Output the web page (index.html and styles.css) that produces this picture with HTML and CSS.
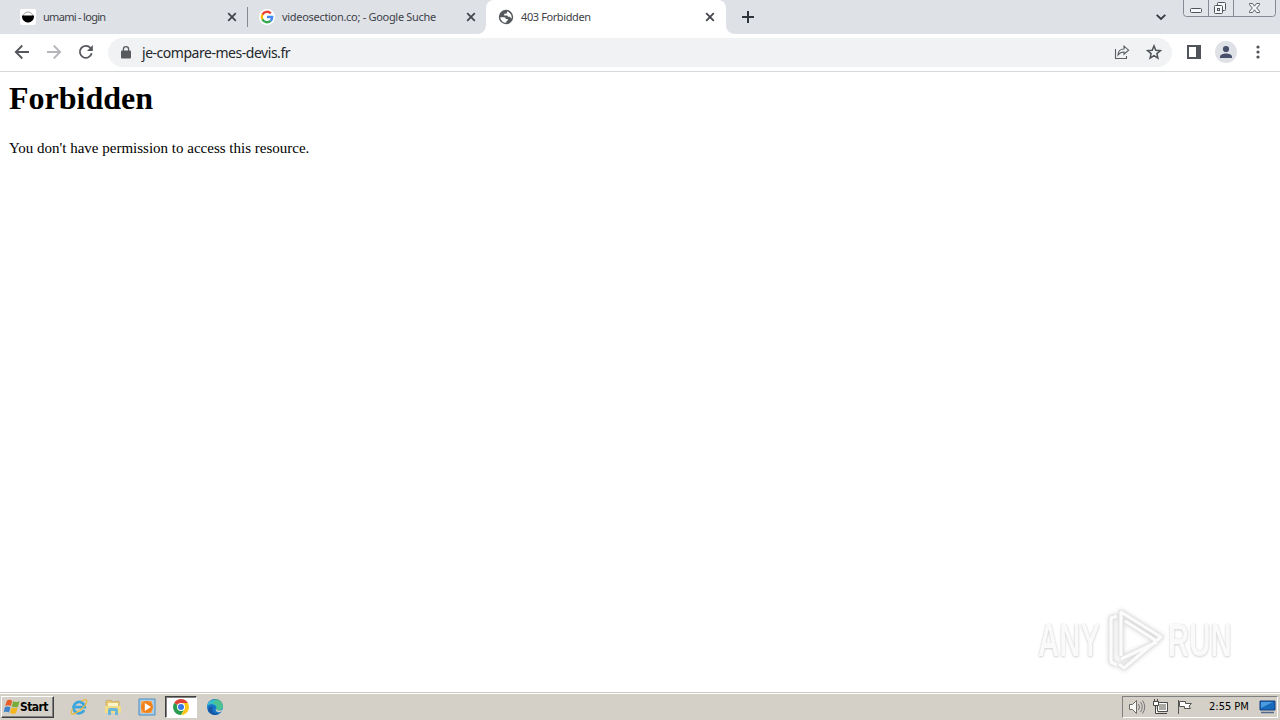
FILE: index.html
```html
<!DOCTYPE html>
<html lang="en">
<head>
<meta charset="utf-8">
<title>403 Forbidden</title>
<link rel="stylesheet" href="styles.css">
</head>
<body>
<header class="tabstrip">
  <div class="tab tab-first">
    <svg class="favicon" viewBox="0 0 16 16"><rect width="16" height="16" rx="2" fill="#fff"/><circle cx="8" cy="8" r="5" fill="#fff" stroke="#888" stroke-width=".8"/><path d="M2 6.500h12v1a6 6 0 0 1-12 0z" fill="#000"/></svg>
    <span class="label label-umami">umami - login</span>
    <svg class="close" viewBox="0 0 10 10"><path d="M1.200 1.200l7.600 7.600M8.800 1.200L1.200 8.800"/></svg>
  </div>
  <div class="tab tab-second">
    <svg class="favicon" viewBox="0 0 16 16"><circle cx="8" cy="8" r="8" fill="#fff"/><g fill="none" stroke-width="2.300"><path d="M3.400 5.600A5.200 5.200 0 0 1 11.800 4.400" stroke="#ea4335"/><path d="M3.400 10.400a5.200 5.200 0 0 1 0-4.800" stroke="#fbbc05"/><path d="M11.600 11.800a5.200 5.200 0 0 1-8.200-1.400" stroke="#34a853"/><path d="M8 8h5.200a5.200 5.200 0 0 1-1.600 3.800" stroke="#4285f4"/></g></svg>
    <span class="label label-google">videosection.co; - Google Suche</span>
    <svg class="close" viewBox="0 0 10 10"><path d="M1.200 1.200l7.600 7.600M8.800 1.200L1.200 8.800"/></svg>
  </div>
  <div class="tab tab-active">
    <svg class="favicon" viewBox="0 0 16 16"><circle cx="8" cy="8" r="7.200" fill="#56595d"/><path d="M2.200 8.200h4q1.600 0 1.600 1.700h2v1.400q-1.600 0-1.600 2.500A5.800 5.800 0 0 1 2.200 8.200zM9 2.600v1.200q0 1-1.500 1H6.200v1.700h2.500q1.300 0 1.300 1.300h1.200q1.300 0 1.600 1.400h.9A6 6 0 0 0 9 2.600z" fill="#fff"/></svg>
    <span class="label label-forbidden">403 Forbidden</span>
    <svg class="close" viewBox="0 0 10 10"><path d="M1.200 1.200l7.600 7.600M8.800 1.200L1.200 8.800"/></svg>
  </div>
  <svg class="new-tab" viewBox="0 0 14 14"><path d="M7 1v12M1 7h12" stroke="#30343b" stroke-width="2"/></svg>
  <svg class="tab-search" viewBox="0 0 12 8"><path d="M1.700 1.800L6 6l4.300-4.200" fill="none" stroke="#35383f" stroke-width="1.800"/></svg>
  <svg class="window-buttons" viewBox="0 0 93 17"><path d="M.5 0v13.500a3 3 0 0 0 3 3h86a3 3 0 0 0 3-3V0" fill="#e2e5e9" stroke="#858a94"/><path d="M25.500 0v16M50.500 0v16" stroke="#858a94"/><g fill="#f7f8f9" stroke="#50545b"><rect x="7.500" y="8.500" width="11" height="4" rx="1"/><rect x="34.500" y="2.500" width="8" height="8" rx="1"/><rect x="31.500" y="5.500" width="8" height="8" rx="1"/><rect x="34.500" y="8.500" width="2" height="2"/><path d="M66.500 3.500h3l2 2.700 2-2.700h3v1.200L73.600 8l2.900 3.300v1.200h-3l-2-2.700-2 2.700h-3v-1.200L69.400 8l-2.900-3.300z" stroke-width=".9"/></g></svg>
</header>
<nav class="toolbar">
  <svg class="nav-icon back" viewBox="0 0 16 16"><path d="M15 8H2M8.300 1.500L1.800 8l6.500 6.500"/></svg>
  <svg class="nav-icon forward" viewBox="0 0 16 16"><path d="M1 8h13M7.700 1.500L14.200 8l-6.500 6.500"/></svg>
  <svg class="nav-icon reload" viewBox="0 0 16 16"><path d="M13.700 9.300A6 6 0 1 1 12.500 4l1.200 1.300"/><path d="M14.800 1v6H9z" class="solid"/></svg>
  <div class="omnibox">
    <svg class="lock" viewBox="0 0 10 13"><rect y="4.500" width="10" height="8" rx="1" fill="#56595e"/><path d="M2.400 5V3.300a2.600 2.600 0 0 1 5.200 0V5" fill="none" stroke="#56595e" stroke-width="1.300"/></svg>
    <span class="url">je-compare-mes-devis.fr</span>
    <svg class="share" viewBox="0 0 16 16"><path d="M1.500 5v9.500h11V12M4 11c.2-4 2.500-6 6-6V2.200l4.600 4-4.600 4V8C7 8 5.500 9 4 11z" fill="none" stroke="#5a5d62" stroke-width="1.100"/></svg>
    <svg class="star" viewBox="0 0 16 16"><path d="M8 1.900l1.800 4.300 4.600.4-3.500 3 1 4.500L8 11.700l-3.900 2.400 1-4.500-3.500-3 4.600-.4z" fill="none" stroke="#50545a" stroke-width="1.500"/></svg>
  </div>
  <svg class="side-panel" viewBox="0 0 14 14"><path d="M0 0h14v14H0zM2 2v10h7V2z" fill-rule="evenodd" fill="#505359"/></svg>
  <svg class="avatar" viewBox="0 0 22 22"><circle cx="11" cy="11" r="11" fill="#dee1e6"/><circle cx="11" cy="8" r="3.100" fill="#47506a"/><path d="M5 17v-1.300C5 13.400 8.500 12.500 11 12.500s6 .9 6 3.200V17z" fill="#47506a"/></svg>
  <svg class="menu" viewBox="0 0 4 14"><g fill="#505359"><circle cx="2" cy="2" r="1.600"/><circle cx="2" cy="7" r="1.600"/><circle cx="2" cy="12" r="1.600"/></g></svg>
</nav>
<main class="page">
  <h1>Forbidden</h1>
  <p>You don't have permission to access this resource.</p>
  <div class="watermark">
    <span class="mark-any">ANY</span>
    <svg class="mark-play" viewBox="0 0 58 64"><g fill="none" stroke-linejoin="round"><path id="play-lines" d="M10 8L4 10v44l6 3M14 48V4L54 29L17 60L12 56M18 13l30 19M14 51L50 34" stroke="#e2e2e2" stroke-width="5"/><path d="M10 8L4 10v44l6 3M14 48V4L54 29L17 60L12 56M18 13l30 19M14 51L50 34" stroke="#fbfbfb" stroke-width="3.200"/></g></svg>
    <span class="mark-run">RUN</span>
  </div>
</main>
<footer class="taskbar">
  <div class="start"><svg viewBox="0 0 16 16"><path d="M3 1.500c2-1 3.400-.8 5.200.2L6.800 7C4.800 6 3 6.200 1.200 7z" fill="#e95d24"/><path d="M9 2.200c2 1 4 .9 6.500 0L14 7.800c-2.200.9-4.200.7-6.300-.4z" fill="#78ad39"/><path d="M1 8c2-.9 3.600-.8 5.500.2L5 13.600c-2-1-3.600-1-5.500-.1z" fill="#3f83cb"/><path d="M7.400 8.500c2 1 4 1 6.200.1L12 14.300c-2 .8-4 .7-6-.4z" fill="#f5b51e"/></svg><span>Start</span></div>
  <svg class="launch ie" viewBox="0 0 18 18"><path d="M14.200 12.200a5.700 5.700 0 1 1 .6-3H5" fill="none" stroke="#3aa5df" stroke-width="2.700"/><path d="M3 10.500C0 15 1 17.500 5.500 15.200 11 12.500 18 5.500 16.500 2.500c-.7-1.300-3.200-.7-5.200.6" fill="none" stroke="#e6b944" stroke-width="1.300"/></svg>
  <svg class="launch folder" viewBox="0 0 18 18"><path d="M2 3l5-1 1 2 7-1v11H2z" fill="#edcb6a" stroke="#b89c58" stroke-width=".6"/><path d="M4 5h10v4H4z" fill="#fbf4ca"/><path d="M1 8h16v7H1z" fill="#f3dc88"/><path d="M4 17v-5q0-2 2-2h6q2 0 2 2v5h-3v-4H7v4z" fill="#69b7d7"/></svg>
  <svg class="launch player" viewBox="0 0 18 18"><path d="M1 1h16v16H1z" fill="#a9cde9" stroke="#4b8dc1"/><path d="M3 3h11v12H3z" fill="#f6ac59"/><circle cx="9" cy="9" r="6" fill="#f28118"/><path d="M6.800 5v8L13 9z" fill="#fff"/></svg>
  <div class="task-active"><svg viewBox="0 0 16 16"><path d="M8 8L1.100 4A8 8 0 0 1 14.900 4H8z" fill="#dd4437"/><path d="M8 8L1.100 4A8 8 0 0 0 8 16l3.500-6z" fill="#289b50"/><path d="M8 4h6.900A8 8 0 0 1 8 16l3.500-6z" fill="#fac719"/><circle cx="8" cy="8" r="4" fill="#fff"/><circle cx="8" cy="8" r="3" fill="#3b78e7"/></svg></div>
  <svg class="launch edge" viewBox="0 0 18 18"><circle cx="9" cy="9" r="8" fill="#1975c9"/><path d="M1.200 8A8 8 0 0 1 16.800 8c.6 3-1.800 4.500-4.500 4.500-2 0-3-1-1.800-2.300C11 7 5 4.500 1.200 8z" fill="#39bfc8"/><path d="M9.500 1c5-.2 9 5.200 7 9-1.500 2.700-6 3-6.500 1 2-2.600.5-4.800-3-5.500z" fill="#5bc65b" opacity=".5"/><path d="M7 9c-2 4 1.500 7.500 6.500 6.500A8 8 0 0 1 2 13c0-3 2-5.500 5-4z" fill="#1757a4"/><path d="M10 11c1 2 4.500 2 7.500.3-.7 2-3.800 3.500-5.800 2.700-1.600-.5-2.400-1.600-1.700-3z" fill="#d4d0c8"/></svg>
  <div class="tray">
    <svg class="speaker" viewBox="0 0 18 16"><path d="M1.500 5.500h3l4-4v13l-4-4h-3z" fill="#f9f9f6" stroke="#6b6b68"/><path d="M10.500 5q2 3 0 6M12.500 3q3.500 5 0 10M14.500 1.500q4.500 6.500 0 13" fill="none" stroke="#777"/></svg>
    <svg class="network" viewBox="0 0 17 16"><path d="M5.500 3.500h10v9h-10z" fill="#aaa9a4" stroke="#4a4a48"/><path d="M6.500 4.500h8v7h-8z" fill="none" stroke="#fff"/><path d="M6 14.500h9M3.500 7v7.500H6M2.500 0v3M5.500 0v3M1.500 2.500h5v4h-5z" fill="#fff" stroke="#444"/></svg>
    <svg class="flag" viewBox="0 0 17 16"><path d="M2.500 1v14M3.500 2.500h6v2h6L13 7l1.500 2.500h-6v-2h-5z" fill="#fff" stroke="#555"/></svg>
    <time>2:55 PM</time>
    <svg class="desktop" viewBox="0 0 17 16"><path d="M1 2h15v9H1z" fill="#1769bc" stroke="#133f80"/><path d="M2 3h12L2 9z" fill="#4b9bdf"/><path d="M2 13.500h13" stroke="#526b8d" stroke-width="1.500"/></svg>
  </div>
</footer>
</body>
</html>
```

FILE: styles.css
```css
* { box-sizing: border-box; }
body { margin: 0; width: 1280px; height: 720px; overflow: hidden; display: flex; flex-direction: column; background: #fff; font-family: "DejaVu Sans Condensed", "DejaVu Sans", sans-serif; }
svg { display: block; flex: none; }
.tabstrip { height: 34px; flex: none; display: flex; align-items: flex-start; background: #dee1e6; }
.tab { height: 34px; display: flex; align-items: center; color: #3f4248; font: 11px "Noto Sans", sans-serif; }
.tab-first { width: 248px; padding: 0 11px 0 20px; background: linear-gradient(#858a92, #858a92) right center / 1px 20px no-repeat; }
.tab-second { width: 238px; padding: 0 10px 0 11px; }
.tab-active { position: relative; width: 240px; padding: 0 11px 0 12px; background: #fff; border-radius: 8px 8px 0 0; }
.tab-active::before, .tab-active::after { content: ""; position: absolute; bottom: 0; width: 8px; height: 8px; }
.tab-active::before { left: -8px; background: radial-gradient(circle at 0 0, transparent 7.5px, #fff 8px); }
.tab-active::after { right: -8px; background: radial-gradient(circle at 100% 0, transparent 7.5px, #fff 8px); }
.favicon { width: 16px; height: 16px; }
.label { flex: 1; white-space: nowrap; margin-left: 7px; padding-bottom: 2px; }
.label-umami { letter-spacing: -.7px; }
.label-google { letter-spacing: -.3px; }
.label-forbidden { letter-spacing: -.4px; }
.close { width: 10px; height: 10px; fill: none; stroke: #43464d; stroke-width: 1.8; }
.new-tab { width: 14px; height: 14px; margin: 10px 0 0 15px; }
.tab-search { width: 12px; height: 8px; margin: 13px 0 0 auto; }
.window-buttons { width: 93px; height: 17px; margin: 0 4px 0 16px; }
.toolbar { height: 38px; flex: none; display: flex; align-items: center; border-bottom: 1px solid #d6d9dc; padding: 0 20px 1px 14px; }
.nav-icon { width: 16px; height: 16px; margin-right: 16px; fill: none; stroke: #54575c; stroke-width: 1.8; }
.nav-icon .solid { fill: #54575c; stroke: none; }
.forward { stroke: #b4b6ba; }
.reload { margin-right: 14px; }
.omnibox { width: 1064px; height: 29px; margin-top: 1px; padding: 0 10px 1px 13px; display: flex; align-items: center; border-radius: 15px; background: #f0f2f4; }
.lock { width: 10px; height: 13px; }
.url { flex: 1; margin-left: 11px; color: #24272b; font: 14px "Noto Sans", sans-serif; letter-spacing: -.47px; white-space: nowrap; }
.share, .star { width: 16px; height: 16px; }
.star { margin-left: 16px; }
.side-panel { width: 14px; height: 14px; margin-left: 15px; }
.avatar { width: 22px; height: 22px; margin-left: 14px; }
.menu { width: 4px; height: 14px; margin-left: 19px; }
.page { position: relative; flex: 1; padding: 8px 9px; color: #000; font: 16px "Liberation Serif", serif; }
.page h1 { margin: 0; font-size: 32px; line-height: 37px; }
.page p { margin: 22px 0 0; line-height: 18px; font-size: 15px; }
.watermark { position: absolute; right: 44px; bottom: 20px; width: 198px; height: 64px; display: flex; align-items: center; font: bold 46px "Liberation Sans", sans-serif; color: #fafafa; text-shadow: 0 0 1px #c8c8c8, 0 1px 3px #d2d2d2; }
.mark-any, .mark-run { flex: none; display: block; transform: scaleX(.64); transform-origin: left; }
.mark-any { width: 69px; }
.mark-run { width: 66px; }
.mark-play { width: 58px; height: 64px; margin-right: 3px; filter: drop-shadow(0 0 2px #d4d4d4); }
.taskbar { height: 28px; flex: none; display: flex; align-items: center; padding: 2px 2px 2px 1px; background: #d4d0c8; border-top: 1px solid #c9c8c4; box-shadow: inset 0 1px #fff; }
.start { width: 53px; height: 22px; display: flex; align-items: center; padding: 0 2px; border: 1px solid; border-color: #fff #404040 #404040 #fff; box-shadow: inset -1px -1px #808080; color: #000; font: bold 12px "DejaVu Sans Condensed", sans-serif; }
.start svg { width: 16px; height: 16px; }
.start span { letter-spacing: -.6px; }
.launch { width: 18px; height: 18px; }
.ie { margin-left: 16px; }
.folder { margin-left: 16px; }
.player { margin-left: 16px; }
.task-active { width: 32px; height: 22px; margin-left: 9px; display: flex; justify-content: center; align-items: center; background: #fff; border: 1px solid; border-color: #404040 #fff #fff #404040; box-shadow: inset 1px 1px #808080; }
.task-active svg { width: 16px; height: 16px; }
.edge { margin-left: 9px; }
.tray { width: 156px; height: 22px; margin-left: auto; display: flex; align-items: center; padding: 0 1px 0 5px; border: 1px solid; border-color: #808080 #fff #fff #808080; }
.speaker { width: 18px; height: 16px; }
.network { width: 17px; height: 16px; margin-left: 6px; }
.flag { width: 17px; height: 16px; margin-left: 7px; }
.tray time { margin-left: 16px; width: 50px; white-space: nowrap; font-size: 11px; color: #000; letter-spacing: 0; }
.desktop { width: 17px; height: 16px; margin-left: auto; }
```
